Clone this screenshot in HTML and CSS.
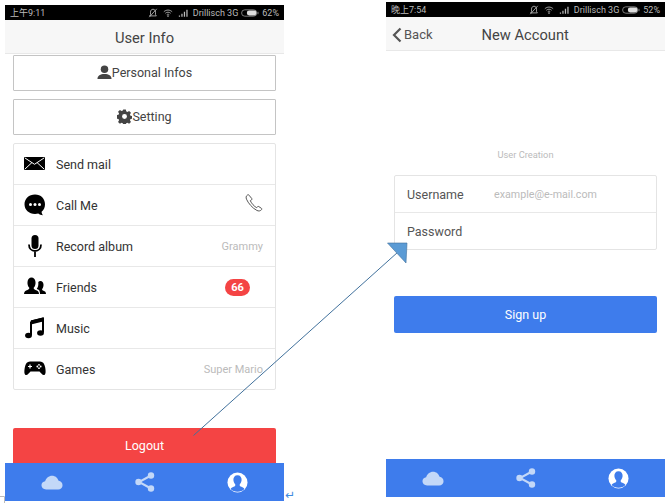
FILE: index.html
```html
<!DOCTYPE html>
<html lang="en">
<head>
    <meta charset="UTF-8">
    <meta name="viewport" content="width=device-width, initial-scale=1.0">
    <title>User Info</title>
    <link rel="stylesheet" href="styles.css">
</head>
<body>
    <svg class="defs" width="0" height="0">
        <symbol id="i-bell" viewBox="0 0 12 12"><path d="M6 1.500C4 1.500 3 3 3 5v3L2 9.500h8L9 8V5c0-2-1-3.500-3-3.500z M1.500 11L10.500 1" fill="none" stroke="#bbb" stroke-width="1"/></symbol>
        <symbol id="i-wifi" viewBox="0 0 12 12"><path d="M1 4.500c3-2.700 7-2.700 10 0M2.800 6.300c2-1.700 4.400-1.700 6.400 0M4.500 8c.9-.7 2.100-.7 3 0" fill="none" stroke="#bbb" stroke-width="1"/><circle cx="6" cy="9.700" r="1" fill="#bbb"/></symbol>
        <symbol id="i-signal" viewBox="0 0 12 12"><path d="M1 9h1.500v1.500H1zM4 7h1.500v3.500H4zM7 4.500h1.500v6H7zM10 2h1.500v8.500H10z" fill="#bbb"/></symbol>
        <symbol id="i-battery" viewBox="0 0 22 10"><rect x=".5" y="1" width="19" height="8" rx="4" fill="none" stroke="#999"/><rect x="7" y="2" width="12" height="6" rx="3" fill="#ddd"/><rect x="20.500" y="3.500" width="1" height="3" fill="#999"/></symbol>
        <symbol id="i-cloud" viewBox="0 0 24 16"><path d="M5.500 15.500C2.500 15.500.5 13.500.5 11c0-2.300 1.700-4 4-4.300C5.500 3 8.500.5 12 .5c3.600 0 6.400 2.400 7.200 5.700 2.500.4 4.300 2.300 4.300 4.700 0 2.600-2 4.600-4.800 4.600z" fill="#c3d8f8"/></symbol>
        <symbol id="i-share" viewBox="0 0 20 20"><path d="M16 3.500L4 10l12 6.500" fill="none" stroke="#c3d8f8" stroke-width="2"/><circle cx="16" cy="3.500" r="3.200" fill="#c3d8f8"/><circle cx="3.500" cy="10" r="3.200" fill="#c3d8f8"/><circle cx="16" cy="16.500" r="3.200" fill="#c3d8f8"/></symbol>
        <symbol id="i-profile" viewBox="0 0 22 22"><circle cx="11" cy="11" r="10.500" fill="#fff"/><path d="M11 3.500c-2.900 0-4.500 2.200-4.300 5 .1 2 1 3.500 2 4.500.3 1.200-.5 1.900-1.800 2.400-1.500.6-2.700 1.100-3.100 2.300C5.500 19.600 8 20.600 11 20.600s5.500-1 7.200-2.900c-.4-1.200-1.600-1.700-3.100-2.300-1.300-.5-2.100-1.200-1.800-2.400 1-1 1.900-2.500 2-4.500.2-2.800-1.400-5-4.300-5z" fill="#3e7cec"/></symbol>
    </svg>

    <div class="phone phone-left">
        <div class="status">
            <span class="status-time">上午9:11</span>
            <span class="status-right">
                <svg class="s-icon"><use href="#i-bell"/></svg>
                <svg class="s-icon"><use href="#i-wifi"/></svg>
                <svg class="s-icon"><use href="#i-signal"/></svg>
                <span>Drillisch 3G</span>
                <svg class="s-batt"><use href="#i-battery"/></svg>
                <span>62%</span>
            </span>
        </div>
        <div class="navbar navbar-center">User Info</div>

        <div class="user-body">
            <div class="big-btn">
                <svg class="big-btn-icon" viewBox="0 0 16 16"><circle cx="8" cy="4.500" r="4" fill="#444"/><path d="M.5 15c0-3.500 3-5.300 7.500-5.300s7.500 1.800 7.500 5.300z" fill="#444"/></svg>Personal Infos
            </div>
            <div class="big-btn">
                <svg class="big-btn-icon" viewBox="0 0 16 16"><path d="M6.600.5h2.800l.4 2 1.300.6 1.800-1.100 2 2-1.100 1.800.6 1.300 1.600.4v2.800l-1.600.4-.6 1.300 1.100 1.800-2 2-1.800-1.100-1.300.6-.4 1.600H6.600l-.4-1.600-1.300-.6-1.800 1.100-2-2 1.100-1.800-.6-1.300-1.600-.4V6.500l1.600-.4.6-1.300L1.100 3l2-2 1.800 1.100 1.300-.6z" fill="#444" fill-rule="evenodd"/><circle cx="8" cy="8" r="2.600" fill="#fff"/></svg>Setting
            </div>

            <ul class="list">
                <li class="row">
                    <svg class="row-icon" viewBox="0 0 22 22"><rect x="0" y="4" width="21" height="13" rx="1" fill="#000"/><path d="M1 5l9.500 6.300L20 5M1 16l7-6.500M20 16l-7-6.500" fill="none" stroke="#fff" stroke-width="1"/></svg>
                    <span class="row-label">Send mail</span>
                </li>
                <li class="row">
                    <svg class="row-icon" viewBox="0 0 22 22"><path d="M11 .5C5 .5.500 4.700.500 10.300S5 20 11 20c1.200 0 2.300-.2 3.300-.5 1.200 1.100 2.900 1.700 4.700 1.700-.9-.9-1.400-2.200-1.400-3.400 2.300-1.800 3.400-4.500 3.400-7.500C21 4.700 17 .5 11 .5z" fill="#000"/><circle cx="6.500" cy="10.500" r="1.500" fill="#fff"/><circle cx="11" cy="10.500" r="1.500" fill="#fff"/><circle cx="15.500" cy="10.500" r="1.500" fill="#fff"/></svg>
                    <span class="row-label">Call Me</span>
                    <svg class="row-phone" viewBox="0 0 18 18"><path d="M2.500 1C1 2 .8 3.500 1.500 5.200c1.500 3.700 6 9 10.300 11.200 1.800.9 3.300.8 4.700-.7.500-.6.400-1-.1-1.400l-2.600-1.700c-.5-.3-.9-.3-1.300.1l-.9 1c-2.400-1.300-5-4.200-6.300-7l1.200-.8c.5-.4.500-.8.300-1.300L4.100 1.300C3.700.6 3.200.5 2.500 1z" fill="none" stroke="#444" stroke-width=".9"/></svg>
                </li>
                <li class="row">
                    <svg class="row-icon" viewBox="0 0 22 22"><rect x="7.500" y="0" width="7" height="14" rx="3.500" fill="#000"/><path d="M5 9.500c0 4 2.500 6.500 6 6.500s6-2.500 6-6.500M11 16v6" fill="none" stroke="#000" stroke-width="1.800"/></svg>
                    <span class="row-label">Record album</span>
                    <span class="row-note">Grammy</span>
                </li>
                <li class="row">
                    <svg class="row-icon" viewBox="0 0 22 22"><path d="M0 18c0-2.500 1.500-3.300 3.500-4 1.200-.5 2-1 1.800-2.200C4 10.500 3.300 8.500 3.500 6 3.800 3 5.300 1.500 7.500 1.500S11.200 3 11.500 6c.2 2.500-.5 4.500-1.800 5.800-.2 1.200.6 1.700 1.800 2.200 2 .7 3.500 1.500 3.500 4z" fill="#000"/><path d="M16 18h6c0-2-1-2.800-2.500-3.300-1-.4-1.600-.8-1.400-1.700 1-1 1.500-2.600 1.400-4.500-.2-2.200-1.300-3.500-3-3.500-.9 0-1.700.4-2.200 1 .3 3-.2 5.200-1.500 6.800.3.400.9.700 1.700 1 1.400.6 1.500 3.700 1.500 3.700z" fill="#000"/></svg>
                    <span class="row-label">Friends</span>
                    <span class="badge">66</span>
                </li>
                <li class="row">
                    <svg class="row-icon" viewBox="0 0 22 22"><path d="M7 4.500L19 1.500v14M7 4.500V18" fill="none" stroke="#000" stroke-width="2"/><path d="M7 3.500L19 .5v4L7 7.500z" fill="#000"/><ellipse cx="4.500" cy="18.500" rx="3.400" ry="2.700" fill="#000"/><ellipse cx="16.500" cy="16" rx="3.400" ry="2.700" fill="#000"/></svg>
                    <span class="row-label">Music</span>
                </li>
                <li class="row">
                    <svg class="row-icon" viewBox="0 0 22 22"><path d="M6 3.500h10c3 0 4.500 2 5.200 6 .6 3.500.8 7-1 7.500-1.700.5-3-1.800-4.700-3.500H6.500C4.800 15.200 3.500 17.500 1.800 17c-1.800-.5-1.600-4-1-7.500.7-4 2.200-6 5.200-6z" fill="#000"/><path d="M4 8.500h4M6 6.500v4" stroke="#fff" stroke-width="1.200"/><circle cx="15" cy="6.800" r=".9" fill="#fff"/><circle cx="15" cy="10.200" r=".9" fill="#fff"/><circle cx="13.300" cy="8.500" r=".9" fill="#fff"/><circle cx="16.700" cy="8.500" r=".9" fill="#fff"/></svg>
                    <span class="row-label">Games</span>
                    <span class="row-note">Super Mario</span>
                </li>
            </ul>

            <div class="action action-red">Logout</div>
        </div>

        <div class="tabbar">
            <svg class="tab-cloud"><use href="#i-cloud"/></svg>
            <svg class="tab-share"><use href="#i-share"/></svg>
            <svg class="tab-profile"><use href="#i-profile"/></svg>
        </div>
    </div>

    <div class="phone phone-right">
        <div class="status">
            <span class="status-time">晚上7:54</span>
            <span class="status-right">
                <svg class="s-icon"><use href="#i-bell"/></svg>
                <svg class="s-icon"><use href="#i-wifi"/></svg>
                <svg class="s-icon"><use href="#i-signal"/></svg>
                <span>Drillisch 3G</span>
                <svg class="s-batt"><use href="#i-battery"/></svg>
                <span>52%</span>
            </span>
        </div>
        <div class="navbar navbar-back">
            <span class="back">
                <svg class="back-icon" viewBox="0 0 10 16"><path d="M8.500 1.500L2 8l6.500 6.500" fill="none" stroke="#555" stroke-width="2.200"/></svg>Back
            </span>
            <span class="navbar-title">New Account</span>
        </div>

        <div class="account-body">
            <p class="hint">User Creation</p>
            <div class="form">
                <div class="form-row">
                    <span class="form-label">Username</span>
                    <span class="form-placeholder">example@e-mail.com</span>
                </div>
                <div class="form-row">
                    <span class="form-label">Password</span>
                </div>
            </div>
            <div class="action action-blue">Sign up</div>
        </div>

        <div class="tabbar">
            <svg class="tab-cloud"><use href="#i-cloud"/></svg>
            <svg class="tab-share"><use href="#i-share"/></svg>
            <svg class="tab-profile"><use href="#i-profile"/></svg>
        </div>
    </div>

    <!-- annotation drawn on top of the two screens -->
    <svg class="overlay" width="672" height="503" viewBox="0 0 672 503">
        <path d="M193.500 435.500L398 252" fill="none" stroke="#41719c" stroke-width="1"/>
        <path d="M407 243H387.500L406 263z" fill="#5b9bd5" stroke="#41719c" stroke-width=".6"/>
        <path d="M0 496.500H4.500V503" fill="none" stroke="#bbb" stroke-width="1"/>
    </svg>
    <span class="return-mark">↵</span>
</body>
</html>
```

FILE: styles.css
```css
html, body {
    margin: 0;
    padding: 0;
}
body {
    font-family: Roboto, "Noto Sans CJK SC", sans-serif;
    background: white;
    width: 672px;
    height: 503px;
    overflow: hidden;
    position: relative;
    display: flex;
    align-items: flex-start;
}
.defs {
    position: absolute;
}
.phone {
    width: 279px;
    display: flex;
    flex-direction: column;
    background: white;
}
.phone-left {
    margin: 5px 0 0 5px;
    height: 496px;
}
.phone-right {
    margin: 2px 0 0 102px;
    height: 495px;
}

/* status bar */
.status {
    height: 15px;
    background: black;
    color: #bbb;
    font-size: 9px;
    display: flex;
    align-items: center;
    justify-content: space-between;
    padding: 0 5px;
    flex: none;
}
.status-right {
    display: flex;
    align-items: center;
    gap: 3px;
}
.s-icon {
    width: 10px;
    height: 10px;
    margin-right: 2px;
}
.s-batt {
    width: 18px;
    height: 8px;
}

/* nav */
.navbar {
    height: 34px;
    background: #f7f7f7;
    border-bottom: 1px solid #e8e8e8;
    box-sizing: border-box;
    padding-top: 3px;
    font-size: 14.700px;
    color: #444;
    flex: none;
}
.navbar-center {
    display: flex;
    align-items: center;
    justify-content: center;
}
.navbar-back {
    display: flex;
    align-items: center;
    padding-left: 6px;
    padding-top: 2px;
}
.back {
    display: flex;
    align-items: center;
    gap: 2px;
    font-size: 13px;
    color: #555;
}
.back-icon {
    width: 10px;
    height: 16px;
}
.navbar-title {
    margin-left: 49px;
}

/* user info screen */
.user-body {
    flex: 1;
    display: flex;
    flex-direction: column;
    padding: 1px 8px 0;
}
.big-btn {
    height: 36px;
    box-sizing: border-box;
    border: 1px solid #c4c4c4;
    border-radius: 1px;
    margin-bottom: 8px;
    padding-bottom: 2px;
    display: flex;
    align-items: center;
    justify-content: center;
    font-size: 12.500px;
    color: #444;
    flex: none;
}
.big-btn-icon {
    width: 15px;
    height: 15px;
}
.list {
    list-style: none;
    margin: 0;
    padding: 0;
    border: 1px solid #e4e4e4;
    border-radius: 2px;
}
.row {
    height: 41px;
    box-sizing: border-box;
    display: flex;
    align-items: center;
    padding: 0 12px 0 10px;
    border-bottom: 1px solid #e8e8e8;
    font-size: 12.500px;
    color: #333;
}
.row:last-child {
    border-bottom: 0;
    height: 40px;
}
.row-icon {
    width: 22px;
    height: 22px;
    margin-right: 10px;
    flex: none;
}
.row-label {
    flex: 1;
}
.row-note {
    font-size: 11px;
    color: #bbb;
}
.row-phone {
    width: 18px;
    height: 18px;
    margin-bottom: 4px;
}
.badge {
    background: #f44444;
    color: white;
    font-size: 11px;
    font-weight: bold;
    width: 25px;
    height: 17px;
    border-radius: 9px;
    display: flex;
    align-items: center;
    justify-content: center;
    margin-right: 13px;
}
.action {
    height: 36px;
    box-sizing: border-box;
    border-radius: 2px;
    color: white;
    font-size: 12.500px;
    display: flex;
    align-items: center;
    justify-content: center;
    flex: none;
}
.action-red {
    background: #f44444;
    margin-top: auto;
    height: 35px;
    border-radius: 2px 2px 0 0;
}
.action-blue {
    background: #3e7cec;
    height: 37px;
    margin-top: 46px;
}

/* new account screen */
.account-body {
    flex: 1;
    display: flex;
    flex-direction: column;
    padding: 0 8px;
}
.hint {
    margin: 98px 0 14px;
    text-align: center;
    font-size: 9.300px;
    line-height: 12px;
    color: #bbb;
}
.form {
    border: 1px solid #e4e4e4;
    border-radius: 2px;
}
.form-row {
    height: 36px;
    display: flex;
    align-items: center;
    padding-left: 12px;
    font-size: 12.500px;
    color: #555;
}
.form-row + .form-row {
    border-top: 1px solid #e8e8e8;
}
.form-label {
    width: 87px;
}
.form-placeholder {
    font-size: 10.700px;
    color: #bbb;
}

/* bottom tabs */
.tabbar {
    height: 38px;
    background: #3e7cec;
    display: flex;
    align-items: center;
    flex: none;
}
.tab-cloud {
    width: 22px;
    height: 15px;
    margin-left: 36px;
}
.tab-share {
    width: 20px;
    height: 20px;
    margin-left: 72px;
}
.tab-profile {
    width: 21px;
    height: 21px;
    margin-left: 72px;
}

/* annotation */
.overlay {
    position: absolute;
    left: 0;
    top: 0;
    pointer-events: none;
}
.return-mark {
    position: absolute;
    left: 285px;
    top: 488px;
    font-family: "DejaVu Sans", sans-serif;
    font-size: 12px;
    line-height: 14px;
    color: #3e8ae0;
}
```
